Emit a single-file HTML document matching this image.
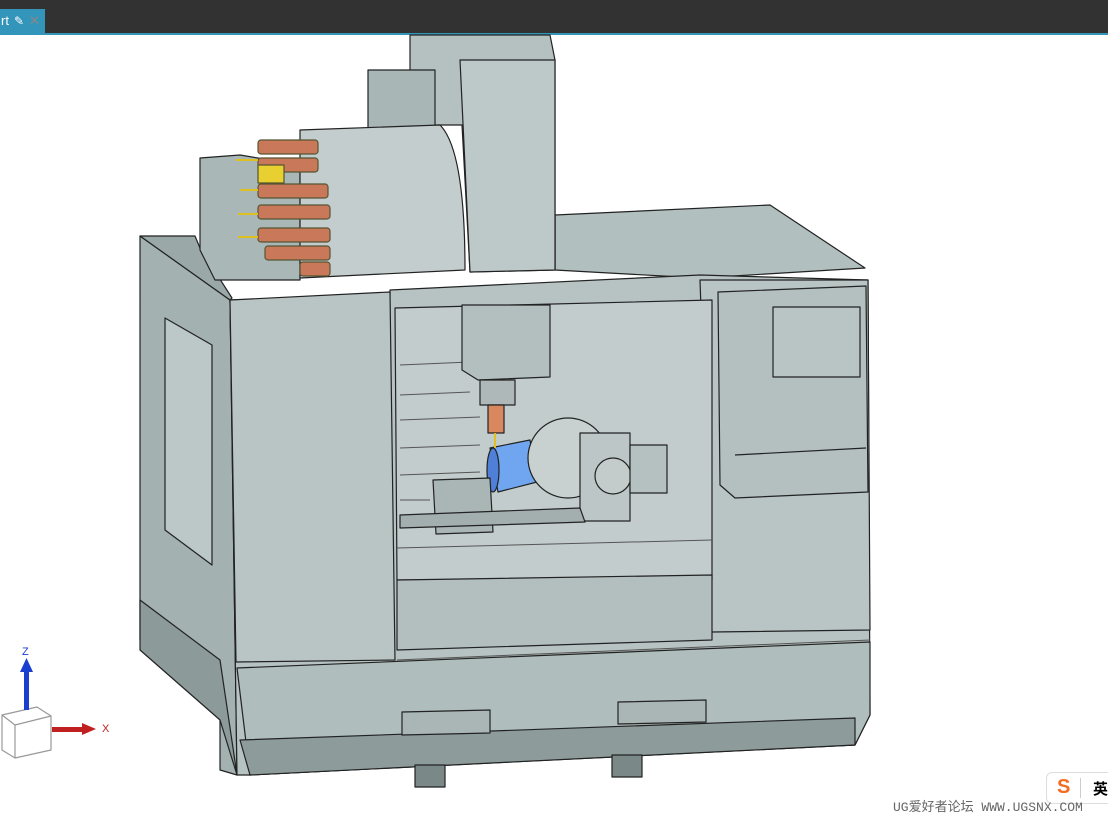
<!DOCTYPE html>
<html><head><meta charset="utf-8"><style>
html,body{margin:0;padding:0;width:1108px;height:818px;overflow:hidden;background:#fff;font-family:"Liberation Sans",sans-serif}
.top{position:absolute;left:0;top:0;width:1108px;height:33px;background:#323232}
.tab{position:absolute;left:0;top:9px;width:45px;height:24px;background:#3395ba;color:#fff;font-size:13px;line-height:24px}
.line{position:absolute;left:0;top:33px;width:1108px;height:2px;background:#3395ba}
svg{position:absolute;left:0;top:0}
.wm{position:absolute;left:893px;top:796px;font-family:"Liberation Mono","WenQuanYi Zen Hei",monospace;font-size:13px;color:#666}
.ime{position:absolute;left:1046px;top:772px;width:70px;height:30px;border:1px solid #ddd;border-radius:6px;background:#fff}
</style></head><body>
<div class="top"></div>
<div class="tab"><span style="margin-left:1px">rt</span><span style="margin-left:5px;font-size:12px">&#9998;</span><span style="margin-left:5px;color:#888">&#10005;</span></div>
<div class="line"></div>
<svg width="1108" height="818" viewBox="0 0 1108 818" stroke="#222" stroke-width="1.2" stroke-linejoin="round">
<!-- back top panel -->
<polygon points="555,215 770,205 865,268 700,278 555,270" fill="#b2bfbf"/>
<!-- left side -->
<polygon points="140,236 230,300 237,775 220,770 220,690 140,640" fill="#a4b1b1"/>
<polygon points="140,236 195,236 200,248 232,298 230,300" fill="#9aa8a8"/>
<polygon points="165,318 212,345 212,565 165,530" fill="#bcc7c7"/>
<polygon points="140,600 220,660 237,775 220,720 140,650" fill="#8c9a9a"/>
<!-- magazine housing -->
<polygon points="200,158 240,155 300,165 300,280 215,280 200,250" fill="#aab7b7"/>
<!-- front face -->
<polygon points="230,300 390,295 390,290 700,275 868,280 870,715 855,745 740,750 250,775 237,775" fill="#b7c3c3"/>
<polygon points="230,300 390,292 395,660 236,662" fill="#b9c5c5"/>
<polygon points="700,280 868,280 870,630 712,632" fill="#b9c5c5"/>
<!-- interior window -->
<polygon points="395,308 712,300 712,580 397,580" fill="#c2cccc"/>
<polygon points="397,580 712,575 712,640 397,650" fill="#b3bfbf"/>
<g stroke="#555" stroke-width="1" fill="none">
<line x1="400" y1="365" x2="470" y2="362"/><line x1="400" y1="395" x2="470" y2="392"/><line x1="400" y1="420" x2="480" y2="417"/><line x1="400" y1="448" x2="480" y2="445"/><line x1="400" y1="475" x2="480" y2="472"/><line x1="400" y1="500" x2="430" y2="500"/>
<line x1="397" y1="548" x2="712" y2="540"/><line x1="397" y1="660" x2="870" y2="640"/>
</g>
<!-- bottom -->
<polygon points="237,668 870,642 870,715 855,745 250,775" fill="#b0bdbd"/>
<polygon points="240,740 855,718 855,745 250,775" fill="#8d9b9b"/>
<polygon points="402,712 490,710 490,733 402,735" fill="#aab6b6"/>
<polygon points="618,702 706,700 706,722 618,724" fill="#aab6b6"/>
<rect x="415" y="765" width="30" height="22" fill="#7a8888"/><rect x="612" y="755" width="30" height="22" fill="#7a8888"/>
<!-- control panel -->
<polygon points="718,292 866,286 868,492 735,498 720,485" fill="#b4c0c0"/>
<rect x="773" y="307" width="87" height="70" fill="#b9c5c5"/>
<line x1="735" y1="455" x2="866" y2="448"/>
<!-- column -->
<polygon points="410,35 550,35 555,60 555,270 470,272 462,125 430,125 410,95" fill="#b5c1c1"/>
<polygon points="460,60 555,60 555,270 470,272" fill="#bdc8c8"/>
<polygon points="368,70 435,70 435,128 368,128" fill="#a9b6b6"/>
<!-- magazine disc -->
<path d="M300,130 L440,125 Q465,150 465,270 L300,278 Z" fill="#c3cdcd"/>
<!-- spindle head -->
<polygon points="462,305 550,305 550,377 478,380 462,370" fill="#b3bfbf"/>
<polygon points="480,380 515,380 515,405 480,405" fill="#aeb8b8"/>
<rect x="488" y="405" width="16" height="28" fill="#d9875e"/>
<!-- workpiece -->
<polygon points="490,448 530,440 537,482 498,492" fill="#6fa6ef"/>
<ellipse cx="493" cy="470" rx="6" ry="22" fill="#4f7fd6"/>
<!-- rotary table -->
<circle cx="568" cy="458" r="40" fill="#c8d0d0"/>
<rect x="580" y="433" width="50" height="88" fill="#bcc6c6"/>
<circle cx="613" cy="476" r="18" fill="#c3cbcb"/>
<rect x="630" y="445" width="37" height="48" fill="#b5c0c0"/>
<!-- vise -->
<polygon points="433,480 490,478 493,532 436,534" fill="#aab6b6"/>
<polygon points="400,515 580,508 585,522 400,528" fill="#a3afaf"/>
<!-- tool pots -->
<g fill="#c9795a" stroke="#553">
<rect x="258" y="140" width="60" height="14" rx="3"/><rect x="258" y="158" width="60" height="14" rx="3"/><rect x="258" y="184" width="70" height="14" rx="3"/><rect x="258" y="205" width="72" height="14" rx="3"/><rect x="258" y="228" width="72" height="14" rx="3"/><rect x="265" y="246" width="65" height="14" rx="3"/><rect x="300" y="262" width="30" height="14" rx="3"/>
</g>
<rect x="258" y="165" width="26" height="18" fill="#e8d030" stroke="#553"/>
<g stroke="#e0c020" stroke-width="2"><line x1="236" y1="160" x2="258" y2="160"/><line x1="240" y1="190" x2="258" y2="190"/><line x1="238" y1="214" x2="258" y2="214"/><line x1="238" y1="237" x2="258" y2="237"/><line x1="495" y1="433" x2="495" y2="448"/></g>
<!-- triad -->
<polygon points="2,715 37,707 51,716 51,750 15,758 2,750" fill="#fff" stroke="#999"/>
<line x1="15" y1="725" x2="51" y2="716" stroke="#999"/><line x1="15" y1="725" x2="15" y2="758" stroke="#999"/><line x1="2" y1="715" x2="15" y2="725" stroke="#999"/>
<rect x="24" y="670" width="5" height="40" fill="#1a3fcf" stroke="none"/><polygon points="20,672 33,672 26.5,658" fill="#1a3fcf" stroke="none"/>
<rect x="52" y="727" width="30" height="5" fill="#c02020" stroke="none"/><polygon points="82,723 82,735 96,729" fill="#c02020" stroke="none"/>
<text x="22" y="655" font-size="11" fill="#1a3fcf" stroke="none" font-family="Liberation Sans">Z</text>
<text x="102" y="732" font-size="11" fill="#c02020" stroke="none" font-family="Liberation Sans">X</text>
</svg>
<div class="ime"><span style="position:absolute;left:10px;top:3px;color:#f36c21;font-weight:bold;font-size:20px">S</span><span style="position:absolute;left:33px;top:5px;width:1px;height:20px;background:#ccc"></span><span style="position:absolute;left:46px;top:5px;font-family:'Noto Sans CJK SC',sans-serif;font-weight:bold;font-size:15px">英</span></div>
<div class="wm">UG爱好者论坛 WWW.UGSNX.COM</div>
</body></html>
